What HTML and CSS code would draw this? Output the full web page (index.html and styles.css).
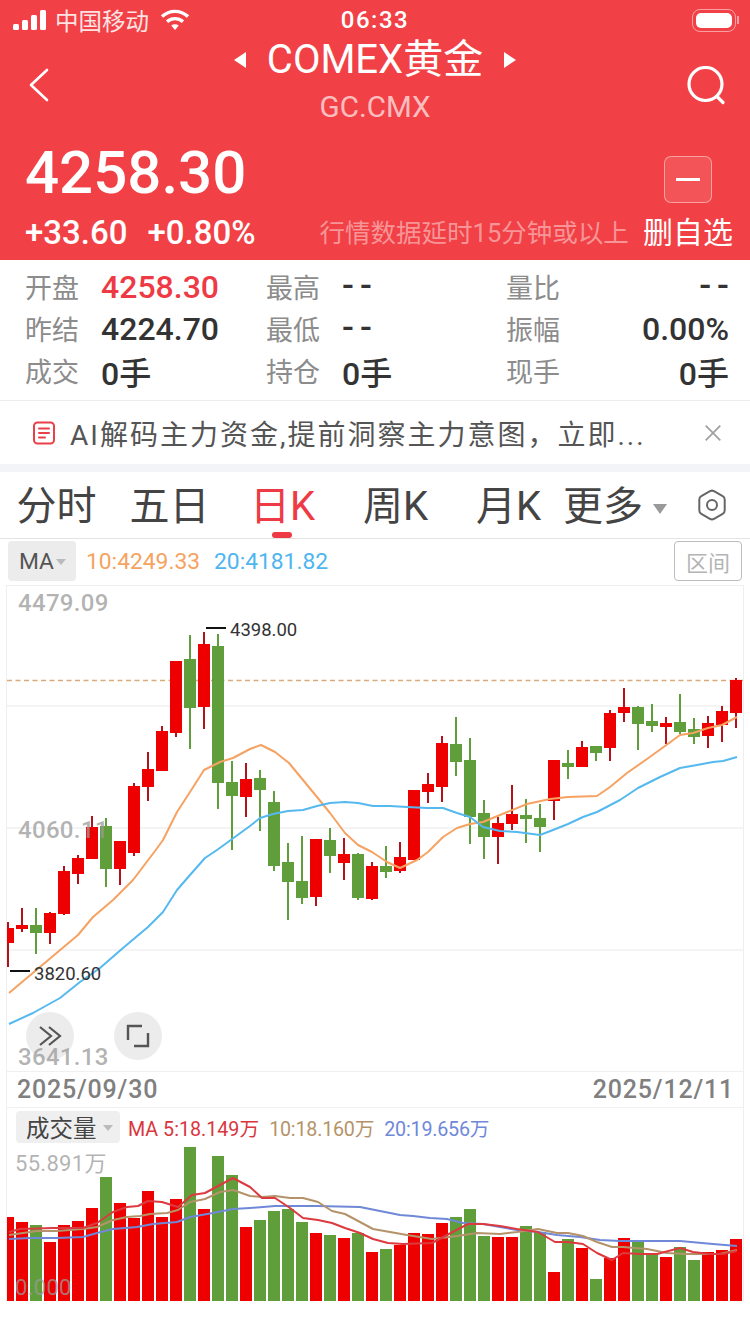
FILE: index.html
```html
<!DOCTYPE html>
<html lang="zh-CN">
<head>
    <meta charset="UTF-8">
    <meta name="viewport" content="width=device-width, initial-scale=1.0">
    <title>COMEX黄金</title>
    <link rel="stylesheet" href="styles.css">
</head>
<body>
    <header class="quote-head">
        <div class="status-bar">
            <div class="status-left">
                <svg class="signal" width="34" height="22" viewBox="0 0 34 22">
                    <rect x="0" y="14" width="6" height="6" rx="1.5"/>
                    <rect x="9" y="10" width="6" height="10" rx="1.5"/>
                    <rect x="18" y="5" width="6" height="15" rx="1.5"/>
                    <rect x="27" y="0" width="6" height="20" rx="1.5"/>
                </svg>
                <span class="carrier">中国移动</span>
                <svg class="wifi" width="30" height="22" viewBox="0 0 30 22" fill="none" stroke="#fff" stroke-width="3.4">
                    <path d="M2 7.5C9.5 .6 20.5 .6 28 7.5"/>
                    <path d="M7 12.6C11.6 8.6 18.4 8.6 23 12.6"/>
                    <path d="M11.2 16.6 15 21l3.8-4.4c-2.2-1.7-5.4-1.7-7.6 0z" fill="#fff" stroke="none"/>
                </svg>
            </div>
            <div class="status-time">06:33</div>
            <div class="status-right">
                <div class="battery"><div class="battery-level"></div></div>
                <div class="battery-nub"></div>
            </div>
        </div>

        <div class="nav-bar">
            <svg class="nav-back" width="24" height="36" viewBox="0 0 24 36" fill="none" stroke="#fff" stroke-width="2.6" stroke-linecap="round" stroke-linejoin="round">
                <path d="M18 3 2 18l16 15"/>
            </svg>
            <div class="nav-title">
                <div class="title-line">
                    <span class="arrow arrow-left"></span>
                    <h1>COMEX黄金</h1>
                    <span class="arrow arrow-right"></span>
                </div>
                <div class="title-code">GC.CMX</div>
            </div>
            <svg class="nav-search" width="40" height="40" viewBox="0 0 40 40" fill="none" stroke="#fff" stroke-width="3.2" stroke-linecap="round">
                <circle cx="18.5" cy="18" r="16.5"/>
                <path d="M30.5 31 36 36.5"/>
            </svg>
        </div>

        <div class="price-row">
            <div class="price-main">
                <div class="price-now">4258.30</div>
                <div class="price-change"><span>+33.60</span><span>+0.80%</span></div>
            </div>
            <div class="delay-note">行情数据延时15分钟或以上</div>
            <div class="watch-box">
                <button class="watch-btn"><span class="watch-minus"></span></button>
                <div class="watch-text">删自选</div>
            </div>
        </div>
    </header>

    <section class="stats">
        <div class="stat"><span class="stat-label">开盘</span><span class="stat-value up">4258.30</span></div>
        <div class="stat"><span class="stat-label">最高</span><span class="stat-value stat-dash">--</span></div>
        <div class="stat stat-end"><span class="stat-label">量比</span><span class="stat-value stat-dash">--</span></div>
        <div class="stat"><span class="stat-label">昨结</span><span class="stat-value">4224.70</span></div>
        <div class="stat"><span class="stat-label">最低</span><span class="stat-value stat-dash">--</span></div>
        <div class="stat stat-end"><span class="stat-label">振幅</span><span class="stat-value">0.00%</span></div>
        <div class="stat"><span class="stat-label">成交</span><span class="stat-value">0手</span></div>
        <div class="stat"><span class="stat-label">持仓</span><span class="stat-value">0手</span></div>
        <div class="stat stat-end"><span class="stat-label">现手</span><span class="stat-value">0手</span></div>
    </section>

    <section class="notice">
        <svg class="notice-icon" width="24" height="24" viewBox="0 0 24 24" fill="none" stroke="#e8414a" stroke-width="2" stroke-linecap="round">
            <rect x="2" y="1.5" width="20" height="21" rx="3.5"/>
            <path d="M7 7.5h10M7 12h10M7 16.5h6"/>
        </svg>
        <div class="notice-text">AI解码主力资金,提前洞察主力意图，立即...</div>
        <svg class="notice-close" width="16" height="16" viewBox="0 0 16 16" fill="none" stroke="#a0a0a0" stroke-width="1.7">
            <path d="M.7.7l14.600 14.600M15.300.7.7 15.300"/>
        </svg>
    </section>

    <nav class="tabs">
        <div class="tab">分时</div>
        <div class="tab">五日</div>
        <div class="tab tab-on">日K</div>
        <div class="tab">周K</div>
        <div class="tab">月K</div>
        <div class="tab-more">更多<span class="tab-caret"></span></div>
        <svg class="tab-gear" width="30" height="32" viewBox="0 0 30 32" fill="none" stroke="#666" stroke-width="2">
            <path d="M13 2.2a4 4 0 0 1 4 0l8.700 5a4 4 0 0 1 2 3.400v10.800a4 4 0 0 1-2 3.400l-8.700 5a4 4 0 0 1-4 0l-8.700-5a4 4 0 0 1-2-3.400V10.600a4 4 0 0 1 2-3.400z"/>
            <circle cx="15" cy="16" r="5"/>
        </svg>
    </nav>

    <div class="ma-bar">
        <div class="ma-select">MA<span class="caret"></span></div>
        <span class="ma-ten">10:4249.33</span>
        <span class="ma-twenty">20:4181.82</span>
        <button class="range-btn">区间</button>
    </div>

    <main class="charts">
        <svg id="kline" class="kline" width="736" height="485" viewBox="7 586 736 485">
            <g id="kline-grid" class="grid">
                <line x1="7" x2="743" y1="706" y2="706"/>
                <line x1="7" x2="743" y1="828" y2="828"/>
                <line x1="7" x2="743" y1="950" y2="950"/>
            </g>
            <line class="last-price" x1="7" x2="743" y1="680.500" y2="680.500"/>
            <g fill="#ececec">
                <circle cx="50" cy="1036" r="24"/>
                <circle cx="138" cy="1036" r="24"/>
            </g>
            <g fill="none" stroke="#555" stroke-width="2.2">
                <path d="M40 1027l11 9-11 9M49 1027l11 9-11 9"/>
                <path d="M128 1040v-14h14M148 1033v13h-14" stroke-width="2.400"/>
            </g>
            <g id="kline-candles"></g>
            <g id="kline-lines"></g>
            <g class="axis-text">
                <text x="18" y="611">4479.09</text>
                <text x="18" y="838">4060.11</text>
                <text x="18" y="1065">3641.13</text>
            </g>
            <g class="extreme">
                <line x1="206" x2="226" y1="628" y2="628"/>
                <text x="230" y="636">4398.00</text>
                <line x1="10" x2="30" y1="971" y2="971"/>
                <text x="34" y="980">3820.60</text>
            </g>
        </svg>

        <div class="dates"><span>2025/09/30</span><span>2025/12/11</span></div>

        <div class="vol-head">
            <div class="vol-select">成交量<span class="caret"></span></div>
            <span class="vol-five">MA 5:18.149万</span>
            <span class="vol-ten">10:18.160万</span>
            <span class="vol-twenty">20:19.656万</span>
        </div>

        <svg id="volume" class="volume" width="736" height="155" viewBox="7 1146 736 155">
            <g id="volume-bars"></g>
            <g id="volume-lines"></g>
            <g class="axis-text vol-axis">
                <text x="15" y="1171">55.891万</text>
                <text x="15" y="1295">0.000</text>
            </g>
        </svg>
    </main>

    <script src="chart.js"></script>
</body>
</html>
```

FILE: styles.css
```css
* {
    box-sizing: border-box;
}

body {
    margin: 0;
    width: 750px;
    height: 1334px;
    overflow: hidden;
    background-color: #fff;
    font-family: Roboto, "Noto Sans CJK SC", sans-serif;
    color: #333;
}

/* red quote header */
.quote-head {
    height: 260px;
    background-color: #f14146;
    color: #fff;
}

.status-bar {
    height: 40px;
    display: grid;
    grid-template-columns: 1fr auto 1fr;
    align-items: center;
}

.status-left {
    display: flex;
    align-items: center;
    padding-left: 13px;
}

.signal {
    fill: #fff;
    margin-top: 1px;
}

.carrier {
    margin-left: 8px;
    font-size: 23.500px;
    color: #fde3e3;
}

.wifi {
    margin-left: 11px;
}

.status-time {
    font-size: 24px;
    font-weight: 500;
    letter-spacing: 1.500px;
}

.status-right {
    display: flex;
    align-items: center;
    justify-content: flex-end;
    padding-right: 11px;
}

.battery {
    width: 44px;
    height: 23px;
    padding: 3px;
    border: 1.5px solid rgba(255, 255, 255, 0.5);
    border-radius: 8px;
}

.battery-level {
    height: 100%;
    border-radius: 5px;
    background-color: #fff;
}

.battery-nub {
    width: 2px;
    height: 8px;
    margin-left: 1px;
    background-color: rgba(255, 255, 255, 0.5);
}

.nav-bar {
    height: 96px;
    display: grid;
    grid-template-columns: 100px 1fr 100px;
    align-items: center;
}

.nav-back {
    margin: -6px 0 0 29px;
}

.nav-search {
    margin: -4px 23px 0 0;
    justify-self: end;
}

.nav-title {
    align-self: start;
    margin-top: -3px;
    text-align: center;
}

.title-line {
    display: flex;
    align-items: center;
    justify-content: center;
    gap: 21px;
    height: 46px;
    margin-bottom: 6px;
}

.title-line h1 {
    margin: 0;
    font-size: 40px;
    font-weight: 400;
    line-height: 46px;
}

.arrow {
    width: 0;
    height: 0;
    border-top: 8px solid transparent;
    border-bottom: 8px solid transparent;
}

.arrow-left {
    border-right: 12px solid #fff;
}

.arrow-right {
    border-left: 12px solid #fff;
}

.title-code {
    font-size: 29.500px;
    line-height: 36px;
    color: rgba(255, 255, 255, 0.68);
}

.price-row {
    height: 124px;
    display: flex;
    align-items: flex-end;
    padding: 0 17px 7px 25px;
}

.price-now {
    margin-bottom: 4px;
    font-size: 60px;
    font-weight: 500;
    line-height: 72px;
}

.price-change {
    display: flex;
    gap: 20px;
    font-size: 33px;
    font-weight: 500;
    line-height: 40px;
}

.delay-note {
    margin-left: 64px;
    font-size: 25.500px;
    line-height: 40px;
    color: rgba(255, 255, 255, 0.45);
    white-space: nowrap;
}

.watch-box {
    margin-left: auto;
    text-align: center;
}

.watch-btn {
    display: flex;
    align-items: center;
    justify-content: center;
    width: 48px;
    height: 47px;
    margin: 0 auto 10px;
    padding: 0;
    background-color: rgba(255, 255, 255, 0.1);
    border: 1px solid rgba(255, 255, 255, 0.45);
    border-radius: 7px;
}

.watch-minus {
    width: 24px;
    height: 3px;
    background-color: #fff;
}

.watch-text {
    font-size: 30px;
    line-height: 40px;
}

/* open / high / low grid */
.stats {
    height: 141px;
    padding: 5px 21px 0 25px;
    display: grid;
    grid-template-columns: 241px 240px 1fr;
    grid-auto-rows: 42px;
    border-bottom: 1px solid #ececec;
}

.stat {
    display: flex;
    align-items: center;
}

.stat-label {
    width: 76px;
    font-size: 27px;
    color: #8c8c8c;
}

.stat-value {
    margin-top: 2px;
    font-size: 32px;
    font-weight: 500;
    color: #333;
}

.stat-value.up {
    color: #ee3a44;
}

.stat-dash {
    margin-top: 0;
    font-size: 35px;
    line-height: 32px;
    letter-spacing: 6px;
}

.stat-end {
    justify-content: space-between;
}

.stat-end .stat-dash {
    margin-right: -6px;
}

.notice {
    height: 63px;
    display: flex;
    align-items: center;
    padding: 0 29px 0 32px;
    border-bottom: 8px solid #f3f4f8;
    box-sizing: content-box;
}

.notice-text {
    margin-left: 14px;
    font-size: 28px;
    letter-spacing: 2px;
    color: #555;
    white-space: nowrap;
}

.notice-close {
    margin-left: auto;
}

/* period tabs */
.tabs {
    height: 67px;
    display: flex;
    align-items: center;
    padding-top: 4px;
    border-bottom: 1px solid #e4e4e4;
}

.tab {
    width: 113px;
    text-align: center;
    font-size: 40px;
    line-height: 46px;
    color: #444;
}

.tab-on {
    position: relative;
    color: #ee3a44;
}

.tab-on::after {
    content: "";
    position: absolute;
    left: 46px;
    bottom: -8px;
    width: 20px;
    height: 6px;
    border-radius: 3px;
    background-color: #ee3a44;
}

.tab-more {
    display: flex;
    align-items: center;
    margin-left: -2px;
    font-size: 40px;
    line-height: 46px;
    color: #444;
}

.tab-caret {
    margin: 4px 0 0 10px;
    border-top: 10px solid #999;
    border-left: 7.5px solid transparent;
    border-right: 7.5px solid transparent;
}

.tab-gear {
    margin: 0 23px 4px auto;
}

.ma-bar {
    height: 46px;
    display: flex;
    align-items: center;
    padding: 0 8px 2px;
    font-size: 22.800px;
}

.ma-select {
    display: flex;
    align-items: center;
    width: 68px;
    height: 40px;
    padding-left: 11px;
    border-radius: 4px;
    background-color: #ececec;
    color: #555;
}

.caret {
    margin: 2px 0 0 2px;
    border-top: 6px solid #bbb;
    border-left: 5px solid transparent;
    border-right: 5px solid transparent;
}

.ma-ten {
    margin-left: 10px;
    color: #f5a35f;
}

.ma-twenty {
    margin-left: 14px;
    color: #4fb5ef;
}

.range-btn {
    margin-left: auto;
    width: 68px;
    height: 40px;
    padding: 0;
    background: #fff;
    border: 1px solid #bdbdbd;
    border-radius: 4px;
    font-family: inherit;
    font-size: 22px;
    color: #b4b4b4;
}

/* kline + volume panels */
.charts {
    width: 738px;
    height: 716px;
    margin-left: 6px;
    border-left: 1px solid #efefef;
    border-right: 1px solid #efefef;
    border-top: 1px solid #efefef;
}

.kline,
.volume {
    display: block;
}

.grid line {
    stroke: #f1f1f1;
    stroke-width: 1.5;
}

.last-price {
    stroke: #d9ab7c;
    stroke-width: 1.5;
    stroke-dasharray: 5 3.500;
}

.axis-text text {
    font-size: 24px;
    font-weight: 500;
    letter-spacing: 0.3px;
    fill: #9a9a9a;
    fill-opacity: 0.75;
}

.vol-axis text {
    font-size: 22px;
    font-weight: 400;
}

.extreme line {
    stroke: #111;
    stroke-width: 2;
}

.extreme text {
    font-size: 18.500px;
    fill: #333;
}

.dates {
    height: 37px;
    display: flex;
    align-items: center;
    justify-content: space-between;
    padding: 0 9px 0 10px;
    border-top: 1.5px solid #f0f0f0;
    border-bottom: 1.5px solid #f0f0f0;
    font-size: 25px;
    font-weight: 500;
    letter-spacing: 0.8px;
    color: #808080;
}

.vol-head {
    height: 38px;
    display: flex;
    align-items: center;
    padding: 0 0 0 9px;
    font-size: 19.700px;
}

.vol-select {
    display: flex;
    align-items: center;
    width: 104px;
    height: 32px;
    padding-left: 10px;
    border-radius: 4px;
    background-color: #efefef;
    font-size: 23.500px;
    color: #444;
}

.vol-select .caret {
    margin-left: 6px;
}

.vol-five {
    margin-left: 8px;
    color: #d9363e;
}

.vol-ten {
    margin-left: 10px;
    letter-spacing: -0.2px;
    color: #b5936a;
}

.vol-twenty {
    margin-left: 10px;
    letter-spacing: -0.2px;
    color: #6f88d8;
}
```

FILE: chart.js
```js
// Draws the candles, volume bars and moving average lines from the series below.
const SVG_NS = 'http://www.w3.org/2000/svg';
const RED = '#ee0000';
const RED_WICK = '#b3121c';
const GREEN = '#5f9e3b';

// wick top, body top, body bottom, wick bottom, colour
const candles = [
    [922, 928, 943, 967, 'r'], [908, 925, 929, 932, 'r'], [908, 925, 933, 954, 'g'], [912, 913, 933, 944, 'r'],
    [866, 871, 914, 915, 'r'], [855, 858, 874, 884, 'r'], [816, 827, 859, 859, 'r'], [818, 826, 869, 887, 'g'],
    [841, 841, 869, 885, 'r'], [783, 786, 853, 856, 'r'], [752, 769, 787, 801, 'r'], [726, 731, 771, 771, 'r'],
    [661, 661, 733, 737, 'r'], [635, 659, 708, 749, 'g'], [632, 644, 707, 729, 'r'], [634, 646, 783, 809, 'g'],
    [761, 782, 796, 850, 'g'], [763, 779, 797, 817, 'r'], [770, 778, 790, 831, 'g'], [791, 802, 866, 871, 'g'],
    [843, 862, 882, 920, 'g'], [836, 881, 898, 904, 'g'], [839, 839, 897, 906, 'r'], [828, 840, 856, 873, 'g'],
    [838, 854, 863, 880, 'r'], [853, 854, 898, 900, 'g'], [862, 866, 899, 900, 'r'], [846, 866, 872, 878, 'g'],
    [842, 857, 871, 873, 'r'], [790, 790, 860, 860, 'r'], [773, 784, 792, 803, 'r'], [736, 743, 787, 802, 'r'],
    [717, 744, 762, 776, 'g'], [738, 760, 817, 844, 'g'], [800, 813, 837, 859, 'g'], [817, 823, 837, 864, 'r'],
    [785, 814, 824, 830, 'r'], [799, 815, 819, 843, 'g'], [804, 818, 827, 852, 'g'], [760, 760, 801, 820, 'r'],
    [750, 763, 767, 779, 'g'], [741, 747, 767, 767, 'r'], [746, 746, 753, 761, 'g'], [710, 713, 748, 761, 'r'],
    [688, 707, 713, 722, 'r'], [706, 707, 724, 750, 'g'], [704, 721, 726, 732, 'g'], [717, 723, 727, 744, 'r'],
    [694, 722, 732, 734, 'g'], [718, 729, 737, 744, 'g'], [716, 723, 736, 748, 'r'], [706, 711, 725, 742, 'r'],
    [678, 680, 713, 728, 'r']
];

// top of each volume bar; the colour follows the candle
const volumeTops = [
    1217, 1222, 1225, 1242, 1225, 1221, 1208, 1177, 1203, 1218, 1191, 1217, 1199, 1147, 1209, 1156, 1175, 1227,
    1220, 1211, 1209, 1222, 1233, 1235, 1238, 1233, 1252, 1249, 1245, 1233, 1234, 1223, 1217, 1209, 1236, 1237,
    1237, 1226, 1232, 1272, 1239, 1248, 1279, 1258, 1238, 1242, 1254, 1257, 1247, 1260, 1252, 1250, 1239
];

const ma10 = '9,993 78,935 93,917 113,900 133,880 155,851 163,840 177,812 190,792 204,770 220,762 233,758 250,749 261,745 275,752 289,763 303,780 317,797 330,813 345,833 358,845 372,852 387,862 400,868 417,860 428,852 443,837 457,828 470,824 483,822 500,815 527,804 550,799 568,797 597,796 610,787 627,773 647,759 665,746 680,735 693,733 708,728 722,725 737,717';
const ma20 = '9,1024 33,1013 60,998 80,982 100,968 123,948 148,927 163,912 177,890 190,875 205,858 217,850 250,826 260,818 273,814 288,811 303,810 317,806 330,803 345,802 358,803 373,806 390,806 407,807 427,808 443,808 457,813 470,817 483,827 500,831 517,832 540,835 553,830 568,824 583,817 597,812 620,800 638,788 660,777 680,768 697,765 713,762 723,761 737,757';

const volMa5 = '9,1232 20,1229 53,1228 83,1228 97,1223 113,1212 127,1207 138,1206 148,1201 162,1202 178,1207 192,1195 205,1193 220,1185 233,1178 250,1187 262,1198 275,1198 290,1208 303,1218 318,1220 332,1223 345,1228 360,1233 373,1239 388,1243 403,1244 432,1243 447,1235 468,1224 483,1224 500,1226 517,1229 538,1232 555,1242 568,1242 583,1244 597,1253 612,1260 623,1253 640,1254 657,1254 680,1248 693,1252 710,1254 723,1254 737,1251';
const volMa10 = '9,1235 37,1231 57,1231 83,1229 97,1227 113,1220 127,1217 140,1216 150,1214 167,1213 178,1210 190,1202 205,1199 220,1192 233,1190 250,1196 262,1197 275,1196 290,1198 303,1198 318,1202 332,1211 345,1214 360,1222 373,1229 390,1232 407,1235 432,1239 457,1236 477,1233 500,1234 517,1232 538,1229 557,1233 568,1233 583,1236 597,1242 612,1247 623,1247 647,1249 667,1253 687,1254 703,1254 720,1254 737,1250';
const volMa20 = '9,1239 30,1238 57,1238 83,1237 97,1233 113,1229 137,1227 153,1224 177,1222 190,1217 213,1213 233,1209 250,1208 275,1206 317,1206 360,1207 390,1213 400,1215 413,1216 430,1218 447,1219 463,1223 483,1224 500,1227 517,1230 538,1232 557,1235 580,1237 600,1240 620,1241 680,1241 713,1244 737,1246';

function add(parent, tag, attrs) {
    const el = document.createElementNS(SVG_NS, tag);
    Object.keys(attrs).forEach((key) => el.setAttribute(key, attrs[key]));
    parent.appendChild(el);
    return el;
}

function drawLine(parent, points, color) {
    add(parent, 'polyline', {
        points: points,
        fill: 'none',
        stroke: color,
        'stroke-width': 2,
        'stroke-linejoin': 'round'
    });
}

const candleLayer = document.getElementById('kline-candles');
const barLayer = document.getElementById('volume-bars');

candles.forEach((c, i) => {
    const center = 8 + i * 14;
    const left = Math.max(center - 6, 7);
    const right = center + 6;
    const isUp = c[4] === 'r';
    const body = isUp ? RED : GREEN;

    add(candleLayer, 'rect', {
        x: center - 1, y: c[0], width: 2, height: c[3] - c[0],
        fill: isUp ? RED_WICK : GREEN
    });
    add(candleLayer, 'rect', {
        x: left, y: c[1], width: right - left, height: c[2] - c[1],
        fill: body
    });
    add(barLayer, 'rect', {
        x: left, y: volumeTops[i], width: right - left, height: 1301 - volumeTops[i],
        fill: body
    });
});

const klineLines = document.getElementById('kline-lines');
drawLine(klineLines, ma10, '#f5a262');
drawLine(klineLines, ma20, '#55b9f0');

const volumeLines = document.getElementById('volume-lines');
drawLine(volumeLines, volMa20, '#6f88d8');
drawLine(volumeLines, volMa10, '#b5936a');
drawLine(volumeLines, volMa5, '#dc3a3f');
```
